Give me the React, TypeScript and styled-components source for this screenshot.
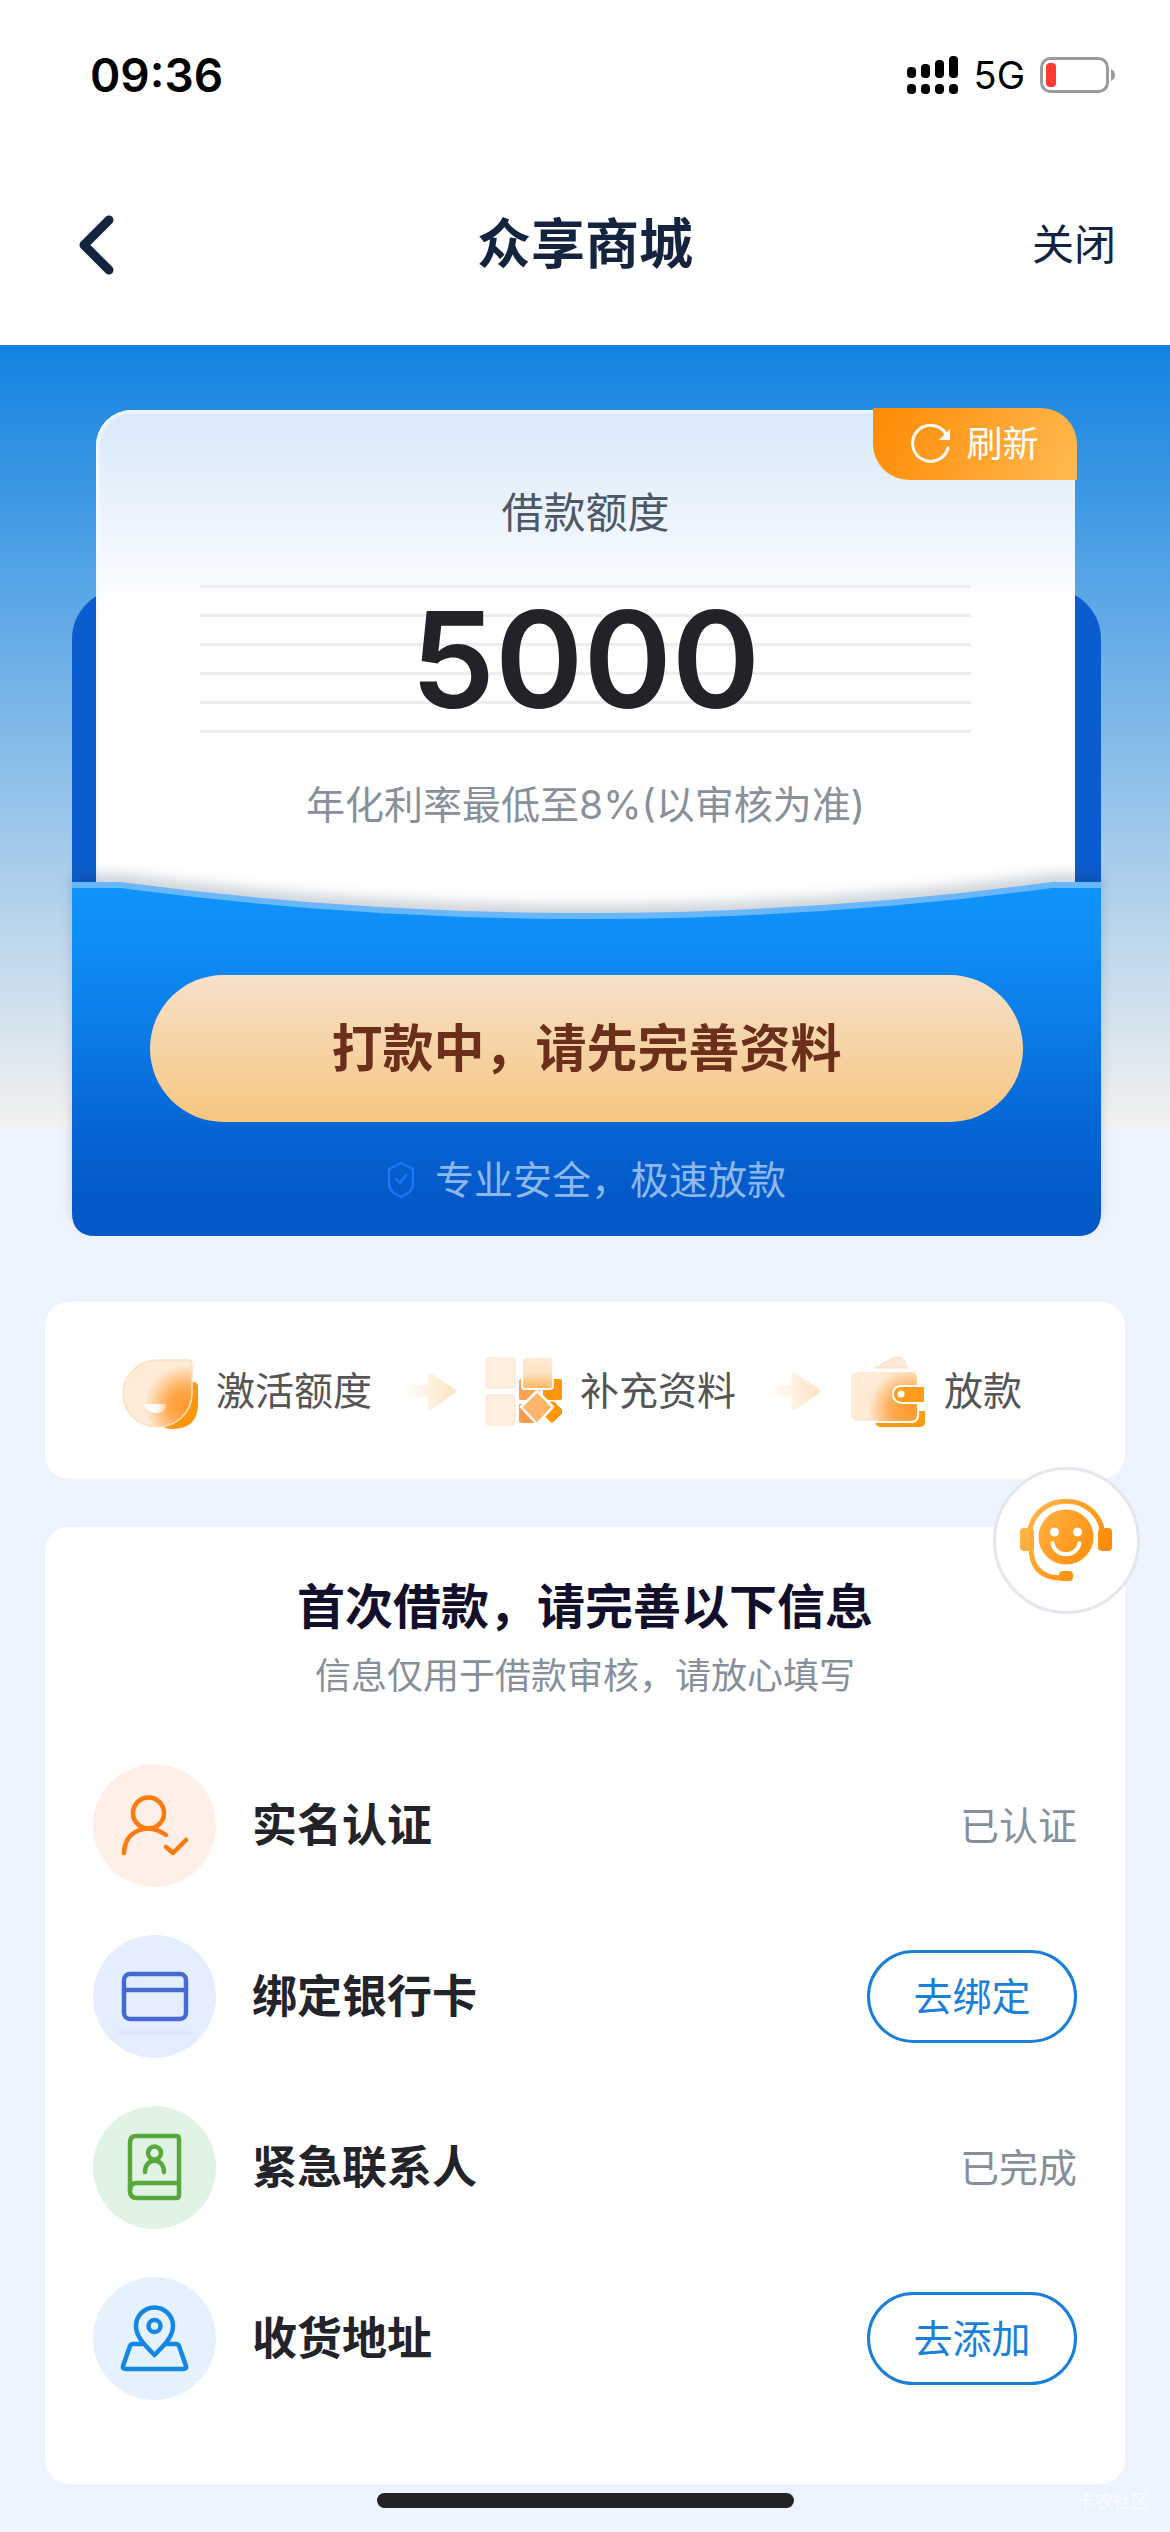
import React from 'react';
import styled, { createGlobalStyle } from 'styled-components';

const GlobalStyle = createGlobalStyle`
  *, *::before, *::after { box-sizing: border-box; }
  body {
    margin: 0;
    background: #edf4ff;
    color: #23232a;
    font-family: Inter, "Noto Sans CJK SC", sans-serif;
  }
  button {
    margin: 0;
    padding: 0;
    border: 0;
    background: none;
    color: inherit;
    font: inherit;
    line-height: 54px;
    cursor: pointer;
  }
  h1, h2, p, ul, ol { margin: 0; padding: 0; }
  ul, ol { list-style: none; }
  svg { display: block; flex: none; }
`;

const Page = styled.div`
  position: relative;
  min-height: 100vh;
`;

/* ---------- header ---------- */

const Header = styled.header`
  padding-bottom: 4px;
  background: #fff;
`;

const StatusBar = styled.div`
  display: flex;
  align-items: center;
  justify-content: space-between;
  height: 149px;
  padding: 0 54px 0 90px;
  color: #000;
`;

const Clock = styled.time`
  font-size: 46px;
  font-weight: 600;
`;

const StatusIcons = styled.div`
  display: flex;
  align-items: center;
  gap: 15px;
`;

const Network = styled.span`
  font-size: 38px;
  font-weight: 400;
`;

const NavBar = styled.nav`
  display: grid;
  grid-template-columns: 1fr auto 1fr;
  align-items: center;
  height: 192px;
  padding: 0 54px;
  color: #14243f;
`;

const BackButton = styled.button`
  justify-self: start;
  padding: 0 22px;
`;

const NavTitle = styled.h1`
  font-size: 54px;
  line-height: 72px;
  font-weight: 700;
`;

const CloseButton = styled.button`
  justify-self: end;
  font-size: 42px;
`;

/* ---------- wallet ---------- */

const Hero = styled.section`
  padding: 63px 69px 0 72px;
  background: linear-gradient(#1283e1, #f3f2f0) no-repeat top / 100% 782px;
`;

const Wallet = styled.div`
  position: relative;
  padding-top: 2px;

  &::before {
    content: '';
    position: absolute;
    inset: 181px 0 48px;
    border-radius: 50px 50px 0 0;
    background: #0b5ccf;
  }
`;

const Paper = styled.div`
  position: relative;
  margin: 0 26px 0 24px;
  padding: 76px 104px 93px;
  border-radius: 36px 36px 0 0;
  background: linear-gradient(#d8e9f9, #f0f6fe 130px, #fff 200px);
  box-shadow: inset 0 3px 3px #f1f8ff, inset 3px 0 3px #f6fbff;
  text-align: center;
`;

const RefreshButton = styled.button`
  position: absolute;
  top: -2px;
  right: -2px;
  display: flex;
  align-items: center;
  justify-content: center;
  gap: 15px;
  width: 204px;
  height: 72px;
  border-radius: 0 36px 0 36px;
  background: linear-gradient(115deg, #ff8a03, #ffba52);
  color: #fff;
  font-size: 36px;
`;

const PaperTitle = styled.h2`
  color: #4d5866;
  font-size: 42px;
  line-height: 54px;
  font-weight: 400;
`;

const Amount = styled.p`
  margin: 45px 0;
  background: repeating-linear-gradient(#eceef1 0 3px, transparent 3px 29px);
  color: #222229;
  font-size: 134px;
  line-height: 148px;
  font-weight: 600;
`;

const Rate = styled.p`
  color: #87909b;
  font-size: 39px;
  line-height: 54px;
  white-space: nowrap;
`;

const Pocket = styled.div`
  position: relative;
  margin-top: -43px;
  padding: 93px 78px 29px;
`;

const PocketShape = styled.svg`
  position: absolute;
  inset: 0;
  width: 100%;
  height: 100%;
  filter: drop-shadow(0 -9px 6px rgba(30, 50, 80, 0.2));
`;

const PrimaryButton = styled.button`
  position: relative;
  display: block;
  width: 100%;
  height: 147px;
  border-radius: 74px;
  background: linear-gradient(#f6e1ca, #f7c67f);
  color: #6b2f1c;
  font-size: 51px;
  font-weight: 700;
`;

const Assurance = styled.p`
  position: relative;
  display: flex;
  align-items: center;
  justify-content: center;
  gap: 20px;
  margin-top: 31px;
  color: #8cb8ee;
  font-size: 39px;
  line-height: 54px;
`;

/* ---------- cards ---------- */

const Main = styled.main`
  display: flex;
  flex-direction: column;
  gap: 48px;
  padding: 66px 45px 0;
`;

const StepsCard = styled.ol`
  display: flex;
  align-items: center;
  padding: 50px 75px 49px;
  border-radius: 24px;
  background: #fff;
`;

const Step = styled.li`
  display: flex;
  align-items: center;
  gap: 18px;
  color: #555;
  font-size: 39px;
  line-height: 54px;
  white-space: nowrap;
`;

const StepArrow = styled.svg`
  margin: 0 28px 0 8px;
`;

const FormCard = styled.section`
  position: relative;
  padding: 47px 48px 84px;
  border-radius: 24px;
  background: #fff;
`;

const FormTitle = styled.h2`
  color: #110f2b;
  font-size: 48px;
  line-height: 66px;
  font-weight: 700;
  text-align: center;
`;

const FormHint = styled.p`
  margin-top: 9px;
  color: #868f9a;
  font-size: 36px;
  line-height: 54px;
  text-align: center;
`;

const TaskList = styled.ul`
  display: flex;
  flex-direction: column;
  gap: 48px;
  margin-top: 61px;
`;

const Task = styled.li`
  display: flex;
  align-items: center;
  gap: 36px;
`;

const TaskIcon = styled.span<{ $bg: string; $color: string }>`
  width: 123px;
  height: 123px;
  border-radius: 50%;
  background: ${(p) => p.$bg};
  color: ${(p) => p.$color};
`;

const TaskName = styled.span`
  flex: 1;
  font-size: 45px;
  line-height: 66px;
  font-weight: 700;
`;

const TaskStatus = styled.span`
  color: #868f9a;
  font-size: 39px;
  line-height: 54px;
`;

const TaskButton = styled.button`
  width: 210px;
  height: 93px;
  border: 3px solid #1a7fd8;
  border-radius: 47px;
  color: #1a7fd8;
  font-size: 39px;
`;

const SupportButton = styled.button`
  position: absolute;
  top: -60px;
  right: -15px;
  width: 147px;
  height: 147px;
  border: 3px solid #e5e6ee;
  border-radius: 50%;
  background: #fff;
`;

const Footer = styled.footer`
  position: relative;
  padding: 9px 0 24px;
`;

const HomeIndicator = styled.div`
  width: 417px;
  height: 15px;
  margin: 0 auto;
  border-radius: 8px;
  background: #232323;
`;

const Watermark = styled.span`
  position: absolute;
  right: 21px;
  bottom: 18px;
  color: rgba(255, 255, 255, 0.75);
  font-size: 18px;
  line-height: 24px;
`;

/* ---------- drawings ---------- */

const SignalIcon = () => (
  <svg width="52" height="38" viewBox="0 0 52 38" fill="#000">
    {[0, 14, 28, 42].map((x, i) => (
      <React.Fragment key={x}>
        <rect x={x} y={11 - [0, 3, 7, 11][i]} width="9" height={11 + [0, 3, 7, 11][i]} rx="4" />
        <rect x={x} y="28" width="9" height="10" rx="4" />
      </React.Fragment>
    ))}
  </svg>
);

const BatteryIcon = () => (
  <svg width="76" height="38" viewBox="0 0 76 38">
    <rect x="1.5" y="2.5" width="66" height="33" rx="9" fill="none" stroke="#9b9b9b" strokeWidth="3" />
    <rect x="6" y="7" width="10" height="24" rx="4" fill="#ff3b30" />
    <path d="M71 13q4 2 4 6t-4 6z" fill="#9b9b9b" />
  </svg>
);

const BackIcon = () => (
  <svg width="40" height="66" viewBox="0 0 40 66" fill="none" stroke="currentColor" strokeWidth="9" strokeLinecap="round" strokeLinejoin="round">
    <path d="M33 8L8 33l25 25" />
  </svg>
);

const RefreshIcon = () => (
  <svg width="40" height="40" viewBox="0 0 40 40" fill="none" stroke="#fff" strokeWidth="3">
    <path d="M37 24A18 18 0 1 1 35 10" strokeLinecap="round" />
    <path d="M39 5v11H28z" fill="#fff" stroke="none" />
  </svg>
);

const ShieldIcon = () => (
  <svg width="28" height="38" viewBox="0 0 28 38" fill="none" stroke="#1a78f7" strokeWidth="2.4" strokeLinecap="round" strokeLinejoin="round">
    <path d="M14 2L26 8V23Q26 31 14 36Q2 31 2 23V8Z" />
    <path d="M9 18l4 4 6-8" />
  </svg>
);

const PocketBackdrop = () => (
  <PocketShape viewBox="0 0 1029 354" preserveAspectRatio="none" aria-hidden="true">
    <defs>
      <linearGradient id="pocket" x1="0" y1="0" x2="0" y2="1">
        <stop offset="0" stopColor="#0f93fc" />
        <stop offset="0.14" stopColor="#0f8ef7" />
        <stop offset="0.4" stopColor="#0b7ce8" />
        <stop offset="0.68" stopColor="#0666d6" />
        <stop offset="0.88" stopColor="#0459c9" />
        <stop offset="1" stopColor="#0458c7" />
      </linearGradient>
    </defs>
    <path d="M0 0H48Q514 62 980 0H1029V330Q1029 354 1005 354H24Q0 354 0 330Z" fill="#69b7fb" />
    <path d="M0 6H48Q514 68 980 6H1029V330Q1029 354 1005 354H24Q0 354 0 330Z" fill="url(#pocket)" />
  </PocketShape>
);

const ActivateIcon = () => (
  <svg width="78" height="78" viewBox="0 0 78 78">
    <defs>
      <radialGradient id="leaf" gradientUnits="userSpaceOnUse" cx="66" cy="54" r="46">
        <stop offset="0" stopColor="#ff992a" />
        <stop offset="0.4" stopColor="#ffab52" />
        <stop offset="0.9" stopColor="#feecd8" />
        <stop offset="1" stopColor="#feecd8" />
      </radialGradient>
      <linearGradient id="mouth">
        <stop offset="0" stopColor="#fff" />
        <stop offset="0.5" stopColor="#fff" />
        <stop offset="1" stopColor="#fff" stopOpacity="0.3" />
      </linearGradient>
    </defs>
    <path d="M50 30H73Q78 30 78 35V52Q78 77 52 77Q46 77 42 74Z" fill="#ff960f" />
    <path d="M37 8H68Q72 8 72 12V42A34.500 33.500 0 1 1 37 8Z" fill="url(#leaf)" stroke="#ffe0c0" strokeWidth="1.500" />
    <path d="M24 52H47Q45 61 36 61T24 52Z" fill="url(#mouth)" />
  </svg>
);

const FillIcon = () => (
  <svg width="78" height="78" viewBox="0 0 78 78">
    <defs>
      <linearGradient id="tile" x1="0" y1="0" x2="0" y2="1">
        <stop offset="0" stopColor="#feecd8" />
        <stop offset="0.5" stopColor="#fee3c4" />
        <stop offset="1" stopColor="#ffb45c" />
      </linearGradient>
    </defs>
    <g fill="#fef0e1" stroke="#fce1ca">
      <rect x="2" y="6" width="29" height="30" rx="3" />
      <rect x="2" y="43" width="29" height="30" rx="3" />
    </g>
    <rect x="35" y="27" width="21" height="21" rx="2" fill="#fda254" />
    <rect x="59" y="27" width="19" height="21" rx="2" fill="#ff960c" />
    <path d="M35 52H48L56 71H38Q35 71 35 68Z" fill="#fb9a4a" />
    <path d="M66 50H70L78 58V61L69 70H67L61 64L68 57Z" fill="#ff960c" stroke="#ff960c" strokeLinejoin="round" />
    <rect x="38" y="5" width="31" height="32" rx="3" fill="url(#tile)" stroke="#fff" strokeWidth="2" />
    <path d="M53 39L69 55L53 72L37 55Z" fill="#ffb56a" stroke="#fff" strokeWidth="2.500" strokeLinejoin="round" />
  </svg>
);

const PayoutIcon = () => (
  <svg width="78" height="78" viewBox="0 0 78 78">
    <defs>
      <radialGradient id="purse" gradientUnits="userSpaceOnUse" cx="62" cy="58" r="52">
        <stop offset="0" stopColor="#ff992a" />
        <stop offset="0.4" stopColor="#ffae5a" />
        <stop offset="0.8" stopColor="#fee9d2" />
        <stop offset="1" stopColor="#feecd8" />
      </radialGradient>
    </defs>
    <path d="M27 16L45 6Q53 3 57 10L59 16Z" fill="#fdeada" stroke="#fbdcc2" />
    <path d="M27 66H68V59H77V70Q77 75 72 75H33Q28 75 27 70Z" fill="#ff9a14" />
    <rect x="2" y="19" width="68" height="51" rx="6" fill="url(#purse)" stroke="#fff" strokeWidth="2" />
    <path d="M77 34H54Q45 34 45 42T54 51H77Z" fill="#ff9c1c" stroke="#fff" strokeWidth="2" />
    <circle cx="53" cy="42" r="3.500" fill="#fff" />
  </svg>
);

const FlowArrow = () => (
  <StepArrow width="58" height="40" viewBox="0 0 58 40" aria-hidden="true">
    <defs>
      <linearGradient id="arrow">
        <stop offset="0.05" stopColor="#ffe8cc" stopOpacity="0" />
        <stop offset="0.9" stopColor="#ffe6c8" />
      </linearGradient>
    </defs>
    <path d="M2 14H30V4Q30 0 34 3L57 18Q59 20 57 22L34 38Q30 40 30 36V26H2Z" fill="url(#arrow)" />
  </StepArrow>
);

const SupportIcon = () => (
  <svg width="141" height="141" viewBox="3 3 141 141">
    <defs>
      <linearGradient id="agent" gradientUnits="userSpaceOnUse" x1="30" y1="45" x2="110" y2="100">
        <stop offset="0" stopColor="#ffb84e" />
        <stop offset="1" stopColor="#ff8800" />
      </linearGradient>
    </defs>
    <g fill="none" stroke="url(#agent)" strokeWidth="5">
      <path d="M37 62C45 25 101 25 109 62" />
      <path d="M38 80C38 98 46 111 68 111" />
    </g>
    <g fill="url(#agent)">
      <rect x="27" y="61" width="14" height="23" rx="4" />
      <rect x="105" y="61" width="14" height="23" rx="4" />
      <rect x="66" y="104" width="14" height="10" rx="4" />
      <circle cx="73" cy="70" r="27.500" />
    </g>
    <circle cx="61.500" cy="65" r="4.500" fill="#fff" />
    <circle cx="84.500" cy="65" r="4.500" fill="#fff" />
    <path d="M59.500 76C62 91 84 91 86.500 76" fill="none" stroke="#fff" strokeWidth="4" strokeLinecap="round" />
  </svg>
);

const TaskGlyph = ({ children }: { children: React.ReactNode }) => (
  <svg width="123" height="123" viewBox="0 0 123 123" fill="none" stroke="currentColor" strokeWidth="4.500" strokeLinecap="round" strokeLinejoin="round" aria-hidden="true">
    {children}
  </svg>
);

const tasks = [
  {
    name: '实名认证',
    status: '已认证',
    bg: '#ffefe6',
    color: '#fd7a0b',
    glyph: (
      <>
        <circle cx="55.500" cy="49" r="15.500" />
        <path d="M31 89C32 66 54 58 73 71" />
        <path d="M73 83l7 6 13-13" />
      </>
    ),
  },
  {
    name: '绑定银行卡',
    action: '去绑定',
    bg: '#e5eefe',
    color: '#456bd1',
    glyph: (
      <>
        <path d="M27 98H97" stroke="#dae4f8" strokeWidth="3" />
        <rect x="31" y="39" width="62" height="45" rx="6" />
        <path d="M31 55H93" />
      </>
    ),
  },
  {
    name: '紧急联系人',
    status: '已完成',
    bg: '#e0f3e5',
    color: '#59a83c',
    glyph: (
      <>
        <path d="M43 30H83Q86 30 86 33V89Q86 92 83 92H44Q37 92 37 85V37Q37 30 43 30Z" />
        <path d="M37 84Q37 77 44 77H86" />
        <circle cx="61.500" cy="47" r="6.500" />
        <path d="M52 66C52 51 71 51 71 66" />
      </>
    ),
  },
  {
    name: '收货地址',
    action: '去添加',
    bg: '#e5f2fe',
    color: '#1487e4',
    glyph: (
      <>
        <path d="M61.500 78C54 70 43 61 43 49A18.500 18.500 0 0 1 80 49C80 61 69 70 61.500 78Z" />
        <circle cx="61.500" cy="49" r="6" />
        <path d="M49 67H40Q38 67 37 69L30 89Q29 92 33 92H90Q94 92 93 89L86 69Q85 67 83 67H74" />
      </>
    ),
  },
];

export default function App() {
  return (
    <Page lang="zh-CN">
      <GlobalStyle />
      <Header>
        <StatusBar>
          <Clock>09:36</Clock>
          <StatusIcons>
            <SignalIcon />
            <Network>5G</Network>
            <BatteryIcon />
          </StatusIcons>
        </StatusBar>
        <NavBar>
          <BackButton type="button" aria-label="返回"><BackIcon /></BackButton>
          <NavTitle>众享商城</NavTitle>
          <CloseButton type="button">关闭</CloseButton>
        </NavBar>
      </Header>

      <Hero>
        <Wallet>
          <Paper>
            <PaperTitle>借款额度</PaperTitle>
            <Amount>5000</Amount>
            <Rate>年化利率最低至8%(以审核为准)</Rate>
            <RefreshButton type="button"><RefreshIcon />刷新</RefreshButton>
          </Paper>
          <Pocket>
            <PocketBackdrop />
            <PrimaryButton type="button">打款中，请先完善资料</PrimaryButton>
            <Assurance><ShieldIcon />专业安全，极速放款</Assurance>
          </Pocket>
        </Wallet>
      </Hero>

      <Main>
        <StepsCard>
          <Step><ActivateIcon />激活额度<FlowArrow /></Step>
          <Step><FillIcon />补充资料<FlowArrow /></Step>
          <Step><PayoutIcon />放款</Step>
        </StepsCard>

        <FormCard>
          <FormTitle>首次借款，请完善以下信息</FormTitle>
          <FormHint>信息仅用于借款审核，请放心填写</FormHint>
          <TaskList>
            {tasks.map((task) => (
              <Task key={task.name}>
                <TaskIcon $bg={task.bg} $color={task.color}>
                  <TaskGlyph>{task.glyph}</TaskGlyph>
                </TaskIcon>
                <TaskName>{task.name}</TaskName>
                {task.action
                  ? <TaskButton type="button">{task.action}</TaskButton>
                  : <TaskStatus>{task.status}</TaskStatus>}
              </Task>
            ))}
          </TaskList>
          <SupportButton type="button" aria-label="在线客服"><SupportIcon /></SupportButton>
        </FormCard>
      </Main>

      <Footer>
        <HomeIndicator />
        <Watermark>卡农社区</Watermark>
      </Footer>
    </Page>
  );
}
